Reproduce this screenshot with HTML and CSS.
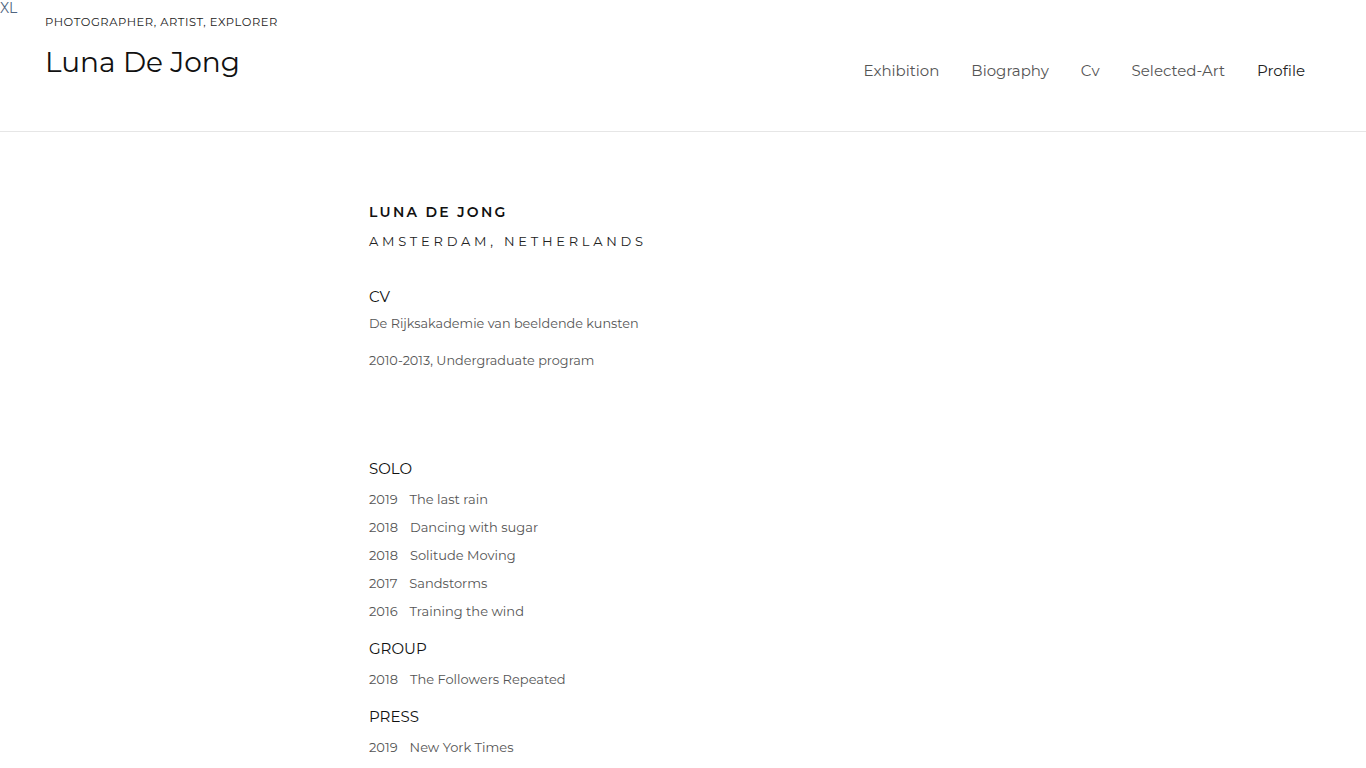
FILE: index.html
```html
<!DOCTYPE html>
<html>
<head>
<meta charset="utf-8">
<link rel="stylesheet" href="styles.css">
</head>
<body>
<div class="xl">XL</div>
<header class="site-header">
  <div class="brand">
    <div class="tagline">PHOTOGRAPHER, ARTIST, EXPLORER</div>
    <div class="site-title">Luna De Jong</div>
  </div>
  <nav class="nav">
    <a>Exhibition</a>
    <a>Biography</a>
    <a>Cv</a>
    <a>Selected-Art</a>
    <a class="active">Profile</a>
  </nav>
</header>
<main class="content">
  <h1 class="name">LUNA DE JONG</h1>
  <div class="location">AMSTERDAM, NETHERLANDS</div>

  <section class="cv">
    <h2>CV</h2>
    <p>De Rijksakademie van beeldende kunsten</p>
    <p>2010-2013, Undergraduate program</p>
  </section>

  <section class="list solo">
    <h2>SOLO</h2>
    <div class="row"><span class="yr">2019</span><span>The last rain</span></div>
    <div class="row"><span class="yr">2018</span><span>Dancing with sugar</span></div>
    <div class="row"><span class="yr">2018</span><span>Solitude Moving</span></div>
    <div class="row"><span class="yr">2017</span><span>Sandstorms</span></div>
    <div class="row"><span class="yr">2016</span><span>Training the wind</span></div>
  </section>
  <section class="list">
    <h2>GROUP</h2>
    <div class="row"><span class="yr">2018</span><span>The Followers Repeated</span></div>
  </section>
  <section class="list">
    <h2>PRESS</h2>
    <div class="row"><span class="yr">2019</span><span>New York Times</span></div>
  </section>
</main>
</body>
</html>
```
FILE: styles.css
```css
* { box-sizing: border-box; }
html, body { margin: 0; padding: 0; background: #fff; }
body {
  font-family: "Montserrat", "Noto Sans", "Liberation Sans", sans-serif;
  color: #222;
}
.xl {
  position: absolute;
  left: 0;
  top: 0;
  font-size: 14px;
  line-height: 16px;
  color: #4f6580;
}
.site-header {
  display: flex;
  justify-content: space-between;
  align-items: flex-start;
  padding: 15px 61px 0 45px;
  height: 132px;
  border-bottom: 1px solid #e6e6e6;
}
.tagline {
  font-size: 11.5px;
  line-height: 15px;
  letter-spacing: 0.55px;
  color: #222;
}
.site-title {
  margin-top: 15px;
  font-size: 28px;
  line-height: 34px;
  color: #111;
  font-weight: 400;
}
.nav {
  display: flex;
  gap: 32px;
  margin-top: 46px;
}
.nav a {
  font-size: 15px;
  line-height: 20px;
  color: #555;
}
.nav a.active { color: #222; }
.content {
  padding: 71px 0 0 369px;
}
.name {
  margin: 0;
  font-size: 14px;
  line-height: 18px;
  font-weight: 600;
  letter-spacing: 2.3px;
  color: #111;
}
.location {
  margin-top: 12px;
  font-size: 13px;
  line-height: 16px;
  letter-spacing: 3.75px;
  color: #222;
}
h2 {
  margin: 0;
  font-size: 15px;
  line-height: 20px;
  font-weight: 400;
  color: #111;
}
.cv { margin-top: 38px; }
.cv h2 { margin-bottom: 8px; }
.cv p {
  margin: 0 0 19px 0;
  font-size: 12.8px;
  line-height: 18px;
  color: #555;
}
.list { margin-top: 14px; }
.list.solo { margin-top: 89px; }
.list h2 { margin-bottom: 6px; }
.row {
  display: flex;
  gap: 12px;
  font-size: 13px;
  line-height: 28px;
  color: #555;
}
```
